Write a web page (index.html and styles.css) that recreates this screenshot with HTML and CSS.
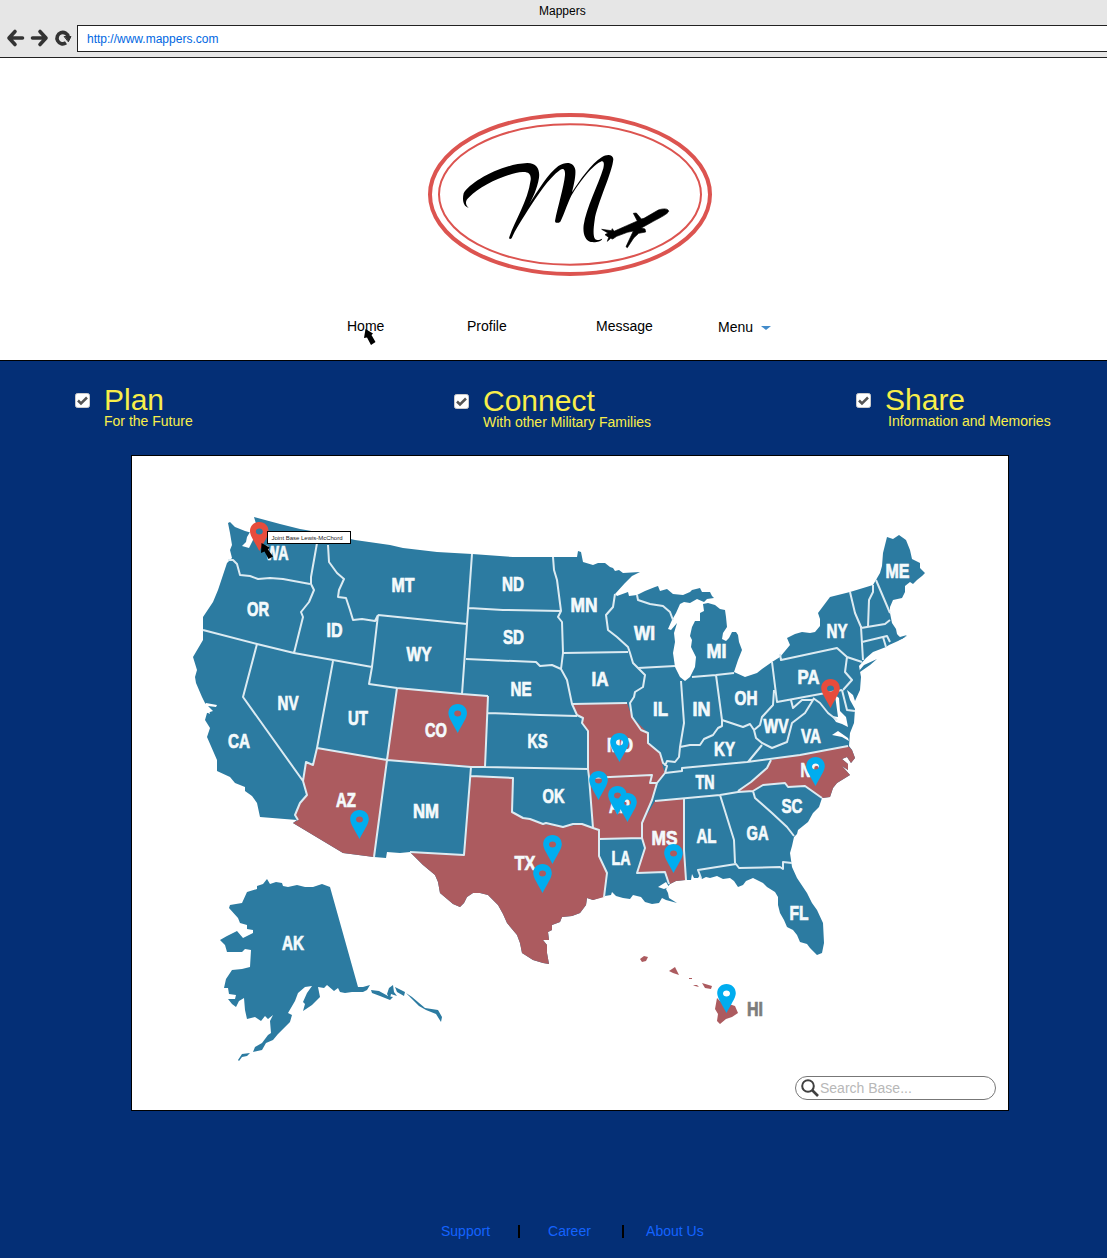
FILE: index.html
```html
<!DOCTYPE html>
<html lang="en">
<head>
<meta charset="utf-8">
<title>Mappers</title>
<link rel="stylesheet" href="styles.css">
</head>
<body>
<header class="browser">
  <div class="browser-title">Mappers</div>
  <div class="toolbar">
    <svg class="controls" width="77" height="28" viewBox="0 0 77 28" fill="none" stroke="#333" stroke-width="3.6" stroke-linecap="round" stroke-linejoin="round">
      <path d="M15 6.500L9 13L15 19.500M10 13H22.500"/>
      <path d="M40 6.500L46 13L40 19.500M45 13H32.500"/>
      <path d="M66 17.800A5.700 5.700 0 1 1 68.300 12" stroke-linecap="butt"/>
      <path d="M64.500 11.500H71L68.500 16.500Z" fill="#333" stroke-width="1"/>
    </svg>
    <div class="address">http://www.mappers.com</div>
  </div>
</header>

<section class="masthead">
  <svg class="logo" width="300" height="180" viewBox="0 0 900 540">
    <g fill="none" stroke="#dc5450">
      <ellipse cx="450" cy="268.500" rx="420" ry="238.500" stroke-width="12"/>
      <ellipse cx="450" cy="268.500" rx="393" ry="210.500" stroke-width="6"/>
    </g>
    <path d="M146 308C130 306 126 285 131 265C150 232 240 178 322 174C352 174 360 195 357 218C352 250 338 280 326 300C355 255 385 205 415 183C440 168 462 172 466 195C468 215 460 245 456 262C480 225 515 175 545 157C560 147 578 147 580 162C578 200 530 300 524 345C518 385 520 405 532 405C540 405 543 402 547 401C542 412 525 412 512 411C495 405 488 385 491 360C498 310 535 240 550 190C554 172 550 166 542 170C510 185 470 245 455 270C440 300 430 335 421 350C415 355 405 355 405 348C412 310 432 245 435 210C436 192 430 188 420 195C385 220 350 275 322 318C305 345 285 375 275 400C270 404 266 402 268 396C285 345 323 290 332 225C334 207 325 200 308 201C260 204 180 243 148 276C134 287 136 300 146 308Z"/>
    <path stroke="#000" stroke-width="2" d="M746 319C743 327 722 337 700 349L664 369L675 372L677 381L656 385L641 399L622 428L618 425L640 378L622 382L590 394L578 402L572 400L562 409L566 397L555 389L564 384L545 373L574 377L577 371L582 379L620 362L652 348L640 325L649 324L664 342L672 340L715 315C730 310 745 310 746 319Z"/>
  </svg>
  <nav class="nav">
    <a class="nav-home">Home
      <svg class="pointer" width="13" height="17" viewBox="0 0 13 17"><path d="M2.500 0L10 4.500L8.500 6L12.500 13L8 16L4 8.500L1 9Z"/></svg>
    </a>
    <a class="nav-profile">Profile</a>
    <a class="nav-message">Message</a>
    <a class="nav-menu">Menu <i class="caret"></i></a>
  </nav>
</section>

<main class="main">
  <section class="features">
    <div class="feature">
      <svg class="check" width="15" height="15" viewBox="0 0 15 15"><rect x=".5" y=".5" width="14" height="14" rx="2" fill="#fff" stroke="#ccc"/><path d="M3 7.500L6 10.500L12 4.500" fill="none" stroke="#555" stroke-width="2.500"/></svg>
      <div><h2>Plan</h2><p>For the Future</p></div>
    </div>
    <div class="feature feature-connect">
      <svg class="check" width="15" height="15" viewBox="0 0 15 15"><rect x=".5" y=".5" width="14" height="14" rx="2" fill="#fff" stroke="#ccc"/><path d="M3 7.500L6 10.500L12 4.500" fill="none" stroke="#555" stroke-width="2.500"/></svg>
      <div><h2>Connect</h2><p>With other Military Families</p></div>
    </div>
    <div class="feature feature-share">
      <svg class="check" width="15" height="15" viewBox="0 0 15 15"><rect x=".5" y=".5" width="14" height="14" rx="2" fill="#fff" stroke="#ccc"/><path d="M3 7.500L6 10.500L12 4.500" fill="none" stroke="#555" stroke-width="2.500"/></svg>
      <div><h2>Share</h2><p>Information and Memories</p></div>
    </div>
  </section>

  <section class="map-card">
    <svg class="map" width="876" height="654" viewBox="132 456 876 654">
      <defs>
        <path id="pin" fill-rule="evenodd" d="M0 0C5.500 0 9.300 4 9.300 9.300C9.300 14 4 21 0 29C-4 21 -9.300 14 -9.300 9.300C-9.300 4 -5.500 0 0 0ZM0 6.500C-2 6.500 -3.500 7.800 -3.500 9.500C-3.500 11.200 -2 12.500 0 12.500C2 12.500 3.500 11.200 3.500 9.500C3.500 7.800 2 6.500 0 6.500Z"/>
      </defs>

      <!-- mainland, Michigan included -->
      <path class="land" d="M230 522L235 527L245 531L252 533L257 527L254 517L280 524L300 529L323 533L355 540L390 545L403 548L437 552L472 554L513 557L553 557L577 557L578 551L581 552L583 562L593 565L598 563L605 563L610 567L613 568L615 571L619 570L623 573L640 572L632 576L625 583L615 594L617 596L628 592L629 596L637 595L645 591L650 589L655 587L658 586L660 591L667 589L673 594L683 595L690 592L692 590L700 588L702 592L710 592L712 596L714 598L707 599L704 602L697 599L690 603L684 602L680 604L676 613L672 620L668 629L671 630L677 623L674 633L675 642L673 653L675 667L680 677L685 681L690 677L695 667L696 657L691 647L692 640L690 636L692 627L695 621L700 621L700 613L704 611L703 604L708 603L715 605L720 609L725 610L726 617L727 627L723 633L722 639L726 641L729 638L732 632L736 632L738 635L739 642L742 650L738 660L734 672L745 677L757 673L762 669L772 662L780 657L790 645L787 638L795 634L802 632L810 633L815 632L820 626L820 619L818 613L830 597L850 592L873 585L880 573L882 566L883 553L887 537L893 539L899 535L906 540L910 550L912 559L920 563L920 568L925 573L922 576L917 580L913 584L910 582L905 586L905 592L902 598L893 600L890 607L890 613L892 623L896 629L897 634L900 638L907 636L898 641L889 645L886 647L873 652L866 658L859 666L861 677L860 690L855 701L853 695L847 690L850 700L855 709L854 723L850 733L849 746L852 750L855 758L851 763L847 757L842 759L848 764L848 770L842 766L850 775L837 783L833 788L830 797L822 798L819 807L813 813L808 822L798 830L797 834L794 837L792 846L790 853L792 867L797 878L807 893L812 903L817 910L823 923L824 943L822 953L817 955L810 948L807 944L800 942L797 935L793 930L787 927L784 920L780 913L778 905L778 897L775 892L767 887L763 883L753 878L746 881L743 885L738 887L734 881L730 878L723 879L717 876L710 878L706 877L702 879L700 875L698 878L694 878L692 874L691 880L685 880L676 881L670 884L666 889L668 893L669 898L677 903L666 900L662 898L659 903L652 904L645 902L641 897L633 895L630 899L623 898L616 896L612 892L611 895L605 896L593 900L587 898L586 905L580 913L572 916L562 917L560 922L552 925L552 930L548 932L549 940L543 940L547 945L547 953L549 964L543 963L533 960L522 953L520 943L517 935L507 923L503 914L498 905L488 895L480 893L473 893L467 897L464 903L460 907L453 904L440 893L438 882L435 875L423 865L410 852L400 853L387 852L386 858L374 857L343 853L293 823L297 820L260 817L257 803L252 796L245 791L245 787L235 783L230 777L217 771L217 760L207 737L210 728L205 720L207 713L213 711L205 703L202 697L196 683L195 677L197 670L193 657L203 640L203 617L213 602L218 590L227 563L232 558L230 550L232 545L230 533L228 523Z"/>
      <!-- Long Island and Cape Cod -->
      <path class="land" d="M859 671L864 665L877 659L870 665L860 672ZM895 633L900 637L907 635L902 639L896 640L892 637Z"/>
      <!-- Alaska -->
      <path class="land" d="M267 879L270 884L276 882L282 883L283 886L288 887L297 885L305 887L313 887L322 884L330 887L358 987L363 987L370 985L367 990L363 992L352 992L345 993L340 992L338 988L334 991L327 985L324 988L318 987L320 997L312 1005L303 1011L305 1004L303 1002L307 993L312 986L305 987L298 993L295 1001L288 1013L292 1015L290 1022L278 1034L273 1040L266 1043L262 1050L253 1052L255 1047L262 1043L268 1035L271 1033L270 1021L273 1015L268 1019L265 1016L261 1021L255 1017L247 1019L245 1010L244 998L239 1001L236 1007L232 1004L228 999L235 999L236 995L229 994L228 988L224 988L226 979L232 970L242 969L250 967L251 950L245 949L242 952L227 952L225 945L220 940L227 936L237 931L243 938L253 933L253 930L247 929L247 925L240 923L238 918L229 908L230 905L242 903L247 892L257 889L257 886L263 884Z"/>
      <path class="land" d="M371 990L379 991L388 996L393 997L390 1000L380 996L372 993ZM389 988L393 985L394 992L397 996L391 994L390 999L387 994ZM395 987L405 992L404 996L397 992ZM406 993L412 997L425 1008L438 1010L442 1017L441 1022L436 1014L426 1010L419 1006ZM238 1060L242 1054L250 1053L247 1056L242 1057L239 1061Z"/>

      <!-- highlighted states -->
      <g class="marked">
        <path d="M397 688L488 696L485 767L387 760Z"/>
        <path d="M317 748L387 760L374 857L343 853L293 823L298 820L295 813L300 803L307 795L303 781L306 762L313 765Z"/>
        <path d="M471 776L513 778L512 812L523 818L530 819L543 824L563 827L582 824L593 828L599 830L599 856L607 873L604 897L593 900L587 898L586 905L580 913L572 916L562 917L560 922L552 925L552 930L548 932L549 940L543 940L547 945L547 953L549 964L543 963L533 960L522 953L520 943L517 935L507 923L503 914L498 905L488 895L480 893L473 893L467 897L464 903L460 907L453 904L440 893L438 882L435 875L423 865L410 852L464 855Z"/>
        <path d="M572 704L627 703L632 717L648 733L648 743L660 753L663 767L665 773L657 783L652 800L642 823L642 838L599 839L599 830L593 828L589 777L588 731L582 723L583 718L577 715Z"/>
        <path d="M655 801L684 799L684 850L686 880L676 881L670 884L665 872L637 873L645 848L642 838L642 823Z"/>
        <path d="M771 760L848 746L852 750L855 758L851 763L847 757L842 759L848 764L848 770L842 766L850 775L837 783L833 788L830 797L822 798L805 786L788 787L785 783L763 785L753 791L738 791L751 782L767 768Z"/>
        <path d="M640 959L644 956L648 957L646 961L642 962ZM669 971L675 967L679 975L673 973ZM693 985h4l2 2l-4 -1ZM689 978h3v1h-3ZM702 983L712 986L711 989L705 988ZM717 998L720 1001L735 1006L738 1013L732 1017L726 1019L720 1024L717 1021L718 1014L715 1009Z"/>
      </g>

      <!-- bodies of water cut into the coast -->
      <path class="water" d="M250 532L254 532L253 540L249 548L242 546L246 542L247 537ZM658 887L666 882L669 887L664 889ZM835 695L839 698L840 711L846 717L848 727L842 724L836 722L832 716L838 717ZM838 731L848 738L849 741L842 737L832 735ZM206 703L217 705L216 707L208 706L210 714L206 712Z"/>

      <!-- state lines -->
      <g class="lines">
        <path d="M228 560L233 560L237 564L240 575L250 576L258 579L270 578L283 579L310 584M317 543L311 577L311 584L314 590L309 602L301 612L303 617L294 653M203 630L257 644L294 653L372 667M328 545L329 562L337 573L344 579L339 590L338 597L346 598L350 610L353 620L362 619L375 621L378 615M378 615L372 667L369 684L397 688L462 694L488 696M378 615L467 624M472 554L467 624L462 694M469 608L503 610L561 611M466 659L536 662L540 666L552 665L561 669M553 557L554 570L557 580L561 611L558 617L562 622L563 653L561 669M563 653L628 652M561 669L567 680L572 704L577 715L583 718L582 723L588 731L588 769L589 777L593 828"/>
        <path d="M488 713L540 715L577 716M488 696L485 767M397 688L387 760L374 857M387 760L471 767L485 767L588 769M572 704L627 703M333 661L317 748L387 760M317 748L313 765L306 762L303 781L307 795L300 803L295 815L298 820M257 644L243 697L303 781M471 767L464 855L410 852M471 776L513 778L512 812L523 818L530 819L543 824L546 823L563 827L573 824L582 824L593 828L599 830L599 856L607 873L604 897M589 778L652 775L650 783L657 783M665 773L657 783L652 800L642 823L642 838L645 848L637 873L665 872L669 884M599 839L642 838"/>
        <path d="M615 594L613 607L606 615L608 630L617 637L628 647L630 653L633 663L645 675L643 687L635 692L634 697L630 703L632 717L641 730L648 733L648 743L660 753L663 763L667 766L665 773M638 668L675 666M637 595L638 600L650 604L663 606L670 612L673 620M681 681L684 723L680 747L679 757L675 762L667 761L665 766M680 747L690 745L700 745L704 739L713 735L718 728L722 726L722 720L743 727L750 724L754 730M716 675L722 720M692 677L716 675L734 673M772 662L777 702L842 690M774 690L773 705L762 717L760 725L754 730L756 738L762 743L772 748L787 742L792 723L805 713L813 700L802 700L793 708L791 700M813 698L820 703L828 713L837 720M762 745L748 762M665 773L682 771L682 768L747 762L800 755L848 746"/>
        <path d="M771 760L767 768L751 782L738 791M655 801L720 795L738 792L753 791L763 785L785 783L788 787L805 786L822 798M753 791L755 798L772 813L787 827L794 836M684 799L684 850L686 880M720 795L734 840L735 863M701 878L698 870L736 864L739 868L780 867L783 869L783 862L792 863M780 654L781 660L837 648L847 657L845 672L852 680L843 690M847 657L862 662M850 592L855 613L861 627L863 660M873 585L873 592L869 600L868 627M876 580L890 613M861 628L885 624L890 620M862 642L887 636L890 642M883 637L886 647M842 690L847 710L855 711"/>
      </g>

      <!-- state labels -->
      <g class="labels">
        <text x="277" y="560" textLength="23" lengthAdjust="spacingAndGlyphs">WA</text>
        <text x="258" y="616" textLength="22" lengthAdjust="spacingAndGlyphs">OR</text>
        <text x="334.500" y="637" textLength="16" lengthAdjust="spacingAndGlyphs">ID</text>
        <text x="288" y="710" textLength="21" lengthAdjust="spacingAndGlyphs">NV</text>
        <text x="358" y="725" textLength="20" lengthAdjust="spacingAndGlyphs">UT</text>
        <text x="436" y="737" textLength="22" lengthAdjust="spacingAndGlyphs">CO</text>
        <text x="239" y="748" textLength="22" lengthAdjust="spacingAndGlyphs">CA</text>
        <text x="346" y="807" textLength="20" lengthAdjust="spacingAndGlyphs">AZ</text>
        <text x="426" y="818" textLength="26" lengthAdjust="spacingAndGlyphs">NM</text>
        <text x="403" y="592" textLength="23" lengthAdjust="spacingAndGlyphs">MT</text>
        <text x="513" y="590.500" textLength="22" lengthAdjust="spacingAndGlyphs">ND</text>
        <text x="513.500" y="644" textLength="21" lengthAdjust="spacingAndGlyphs">SD</text>
        <text x="419" y="661" textLength="25" lengthAdjust="spacingAndGlyphs">WY</text>
        <text x="521" y="696" textLength="21" lengthAdjust="spacingAndGlyphs">NE</text>
        <text x="537.500" y="748" textLength="20" lengthAdjust="spacingAndGlyphs">KS</text>
        <text x="584" y="612" textLength="27" lengthAdjust="spacingAndGlyphs">MN</text>
        <text x="600" y="686" textLength="17" lengthAdjust="spacingAndGlyphs">IA</text>
        <text x="644.500" y="640" textLength="21" lengthAdjust="spacingAndGlyphs">WI</text>
        <text x="716.500" y="658" textLength="20" lengthAdjust="spacingAndGlyphs">MI</text>
        <text x="660.500" y="715.500" textLength="15" lengthAdjust="spacingAndGlyphs">IL</text>
        <text x="701.500" y="715.500" textLength="18" lengthAdjust="spacingAndGlyphs">IN</text>
        <text x="746" y="704.500" textLength="23" lengthAdjust="spacingAndGlyphs">OH</text>
        <text x="776" y="732.500" textLength="25" lengthAdjust="spacingAndGlyphs">WV</text>
        <text x="724.500" y="756" textLength="21" lengthAdjust="spacingAndGlyphs">KY</text>
        <text x="705" y="788.500" textLength="19" lengthAdjust="spacingAndGlyphs">TN</text>
        <text x="620" y="752" textLength="26" lengthAdjust="spacingAndGlyphs">MO</text>
        <text x="837" y="638" textLength="21" lengthAdjust="spacingAndGlyphs">NY</text>
        <text x="897.500" y="578" textLength="24" lengthAdjust="spacingAndGlyphs">ME</text>
        <text x="808.500" y="683.500" textLength="22" lengthAdjust="spacingAndGlyphs">PA</text>
        <text x="811" y="742.500" textLength="20" lengthAdjust="spacingAndGlyphs">VA</text>
        <text x="811" y="777" textLength="21" lengthAdjust="spacingAndGlyphs">NC</text>
        <text x="553.500" y="803" textLength="22" lengthAdjust="spacingAndGlyphs">OK</text>
        <text x="525" y="870" textLength="21" lengthAdjust="spacingAndGlyphs">TX</text>
        <text x="621" y="864.500" textLength="19" lengthAdjust="spacingAndGlyphs">LA</text>
        <text x="619.500" y="813" textLength="21" lengthAdjust="spacingAndGlyphs">AR</text>
        <text x="792" y="812.500" textLength="21" lengthAdjust="spacingAndGlyphs">SC</text>
        <text x="706.500" y="842.500" textLength="20" lengthAdjust="spacingAndGlyphs">AL</text>
        <text x="757.500" y="839.500" textLength="22" lengthAdjust="spacingAndGlyphs">GA</text>
        <text x="664.500" y="845" textLength="26" lengthAdjust="spacingAndGlyphs">MS</text>
        <text x="799" y="919.500" textLength="19" lengthAdjust="spacingAndGlyphs">FL</text>
        <text x="293" y="950" textLength="22" lengthAdjust="spacingAndGlyphs">AK</text>
        <text class="label-dark" x="755" y="1016" textLength="16" lengthAdjust="spacingAndGlyphs">HI</text>
      </g>

      <g fill="#00adef">
        <use href="#pin" x="457.700" y="704"/>
        <use href="#pin" x="359.500" y="810"/>
        <use href="#pin" x="619.500" y="733"/>
        <use href="#pin" x="598.500" y="771"/>
        <use href="#pin" x="617.500" y="786"/>
        <use href="#pin" x="627.500" y="793"/>
        <use href="#pin" x="552.500" y="835"/>
        <use href="#pin" x="542.500" y="864"/>
        <use href="#pin" x="673.500" y="844"/>
        <use href="#pin" x="815.500" y="757"/>
        <use href="#pin" x="726.500" y="984"/>
      </g>
      <g fill="#e74c3c">
        <use href="#pin" x="830.500" y="679"/>
        <use href="#pin" x="259.300" y="522"/>
      </g>
      <rect x="267.500" y="531.500" width="83" height="12" fill="#fff" stroke="#000"/>
      <text class="tip" x="271.500" y="540" textLength="71">Joint Base Lewis-McChord</text>
      <path d="M261.500 543L269.500 547.500L268 549.500L273 556.500L268.500 559L264.500 551.500L261 553Z"/>
    </svg>
    <div class="search">
      <svg width="20" height="20" viewBox="0 0 20 20" fill="none" stroke="#404040"><circle cx="8" cy="8" r="5.800" stroke-width="2"/><path d="M12 12L18 18" stroke-width="2.600"/></svg>
      <span>Search Base...</span>
    </div>
  </section>

  <footer class="footer">
    <a>Support</a><i class="bar"></i><a class="career">Career</a><i class="bar"></i><a>About Us</a>
  </footer>
</main>
</body>
</html>
```
FILE: styles.css
```css
* { box-sizing: border-box; }
body {
  margin: 0;
  background: #fff;
  color: #000;
  font: 14px/16px "Liberation Sans", Arial, sans-serif;
}
.browser {
  height: 58px;
  background: #e6e6e6;
  border-bottom: 1px solid #222;
  font-size: 12px;
  line-height: 14px;
}
.browser-title { height: 25px; padding: 4px 0 0 539px; }
.toolbar { display: flex; height: 27px; }
.controls { flex: none; }
.address {
  flex: 1;
  padding: 6px 0 0 9px;
  background: #fff;
  border: 1px solid #222;
  border-right: 0;
  color: #0067e2;
}
.masthead {
  height: 303px;
  padding-top: 47px;
  border-bottom: 1px solid #000;
}
.logo { display: block; margin-left: 420px; }
.nav { display: flex; padding: 33px 0 0 347px; }
.nav a { flex: none; }
.nav-home { position: relative; width: 120px; }
.pointer { position: absolute; left: 16px; top: 11px; }
.nav-profile { width: 129px; }
.nav-message { width: 122px; }
.nav-menu { padding-top: 1px; }
.caret {
  display: inline-block;
  margin: 0 0 2px 4px;
  border: 5.500px solid transparent;
  border-top: 4px solid #428bca;
  border-bottom: 0;
}
.main {
  height: 897px;
  background: #042f76;
}
.features {
  display: grid;
  grid-template-columns: 379px 402px 1fr;
  height: 94px;
  padding: 22px 0 0 75px;
  color: #f8ee4a;
}
.feature { display: flex; gap: 14px; }
.feature-connect { padding-top: 1px; }
.check { flex: none; margin-top: 10px; }
.feature h2 { margin: 0; font-size: 30px; font-weight: 400; line-height: 34px; }
.feature p { margin: -4px 0 0; }
.feature-share p { padding-left: 3px; }
.map-card {
  display: grid;
  width: 878px;
  height: 656px;
  margin-left: 131px;
  background: #fff;
  border: 1px solid #000;
}
.map, .search { grid-area: 1 / 1; }
.land { fill: #2c7ba1; }
.marked { fill: #ac5b5f; }
.water { fill: #fff; }
.lines { fill: none; stroke: #dcebf2; stroke-width: 2; stroke-linejoin: round; }
.labels {
  fill: #f4fafc;
  stroke: #f4fafc;
  stroke-width: .7;
  font-size: 19.500px;
  font-weight: 700;
  text-anchor: middle;
}
.labels .label-dark { fill: #7c7c7c; stroke: #7c7c7c; }
.tip { font-size: 6px; fill: #222; }
.search {
  align-self: end;
  justify-self: end;
  display: flex;
  align-items: center;
  width: 201px;
  height: 24px;
  margin: 0 12px 10px 0;
  padding-left: 4px;
  border: 1px solid #777;
  border-radius: 12px;
  color: #b8b8b8;
}
.footer {
  display: flex;
  padding: 112px 0 0 441px;
  color: #1463ff;
}
.bar { width: 2px; height: 13px; margin: 2px 28px 0; background: #000; }
.career { width: 46px; }
.career + .bar { margin-right: 22px; }
```
